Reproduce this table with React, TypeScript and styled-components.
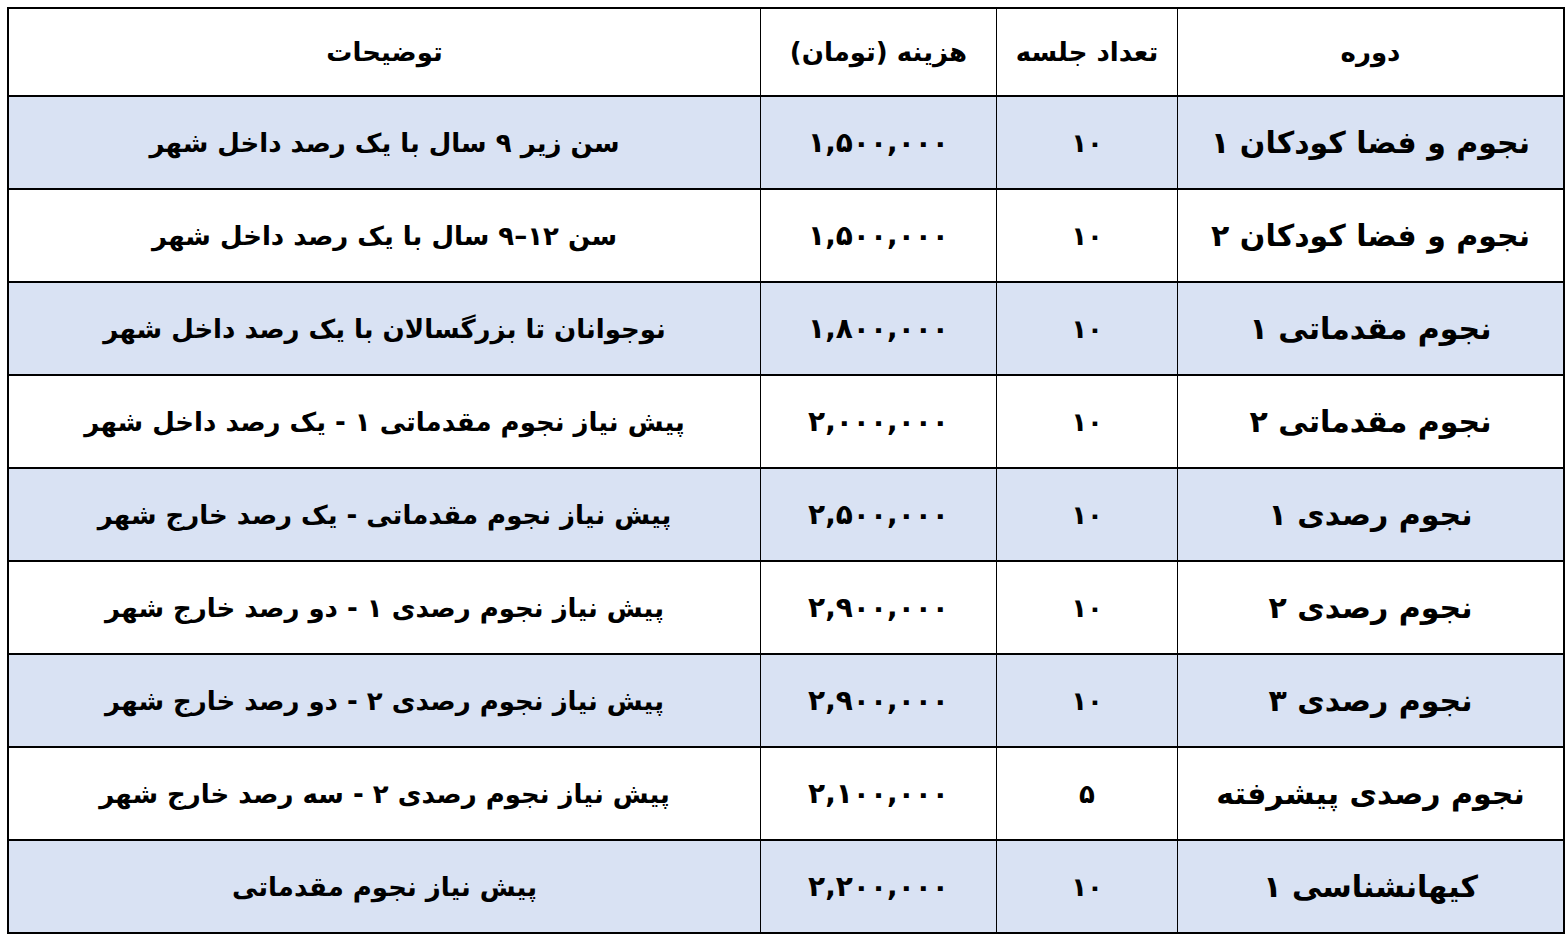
import React from "react";
import styled, { createGlobalStyle } from "styled-components";

const GlobalStyle = createGlobalStyle`
    html, body {
        margin: 0;
        padding: 0;
        background: #ffffff;
    }
    body {
        font-family: "DejaVu Sans", "Noto Sans", sans-serif;
    }
`;

const Page = styled.div`
    padding: 7px 6px 6px 7px;
`;

const Table = styled.table`
    width: 1551px;
    direction: rtl;
    border-collapse: collapse;
    border: 2px solid #000;
    table-layout: fixed;
    color: #000;
`;

const HeadCell = styled.th<{ $w: number }>`
    width: ${p => p.$w}px;
    height: 86px;
    padding: 0;
    border-left: 1px solid #000;
    border-right: 1px solid #000;
    border-bottom: 2px solid #000;
    font-size: 26px;
    font-weight: bold;
    text-align: center;
    vertical-align: middle;
`;

const Row = styled.tr<{ $shaded: boolean }>`
    height: 93px;
    background-color: ${p => (p.$shaded ? "#d9e2f3" : "#ffffff")};
`;

const Cell = styled.td<{ $size: number }>`
    padding: 0 6px;
    border-left: 1px solid #000;
    border-right: 1px solid #000;
    border-bottom: 2px solid #000;
    font-size: ${p => p.$size}px;
    font-weight: bold;
    text-align: center;
    vertical-align: middle;
    white-space: nowrap;
`;

const courses = [
    { name: "نجوم و فضا کودکان ۱", sessions: "۱۰", price: "۱,۵۰۰,۰۰۰", note: "سن زیر ۹ سال با یک رصد داخل شهر" },
    { name: "نجوم و فضا کودکان ۲", sessions: "۱۰", price: "۱,۵۰۰,۰۰۰", note: "سن ۱۲–۹ سال با یک رصد داخل شهر" },
    { name: "نجوم مقدماتی ۱", sessions: "۱۰", price: "۱,۸۰۰,۰۰۰", note: "نوجوانان تا بزرگسالان با یک رصد داخل شهر" },
    { name: "نجوم مقدماتی ۲", sessions: "۱۰", price: "۲,۰۰۰,۰۰۰", note: "پیش نیاز نجوم مقدماتی ۱ - یک رصد داخل شهر" },
    { name: "نجوم رصدی ۱", sessions: "۱۰", price: "۲,۵۰۰,۰۰۰", note: "پیش نیاز نجوم مقدماتی - یک رصد خارج شهر" },
    { name: "نجوم رصدی ۲", sessions: "۱۰", price: "۲,۹۰۰,۰۰۰", note: "پیش نیاز نجوم رصدی ۱ - دو رصد خارج شهر" },
    { name: "نجوم رصدی ۳", sessions: "۱۰", price: "۲,۹۰۰,۰۰۰", note: "پیش نیاز نجوم رصدی ۲ - دو رصد خارج شهر" },
    { name: "نجوم رصدی پیشرفته", sessions: "۵", price: "۲,۱۰۰,۰۰۰", note: "پیش نیاز نجوم رصدی ۲ - سه رصد خارج شهر" },
    { name: "کیهانشناسی ۱", sessions: "۱۰", price: "۲,۲۰۰,۰۰۰", note: "پیش نیاز نجوم مقدماتی" },
];

export default function App() {
    return (
        <Page>
            <GlobalStyle />
            <Table>
                <thead>
                    <tr>
                        <HeadCell $w={385}>دوره</HeadCell>
                        <HeadCell $w={180}>تعداد جلسه</HeadCell>
                        <HeadCell $w={235}>هزینه (تومان)</HeadCell>
                        <HeadCell $w={751}>توضیحات</HeadCell>
                    </tr>
                </thead>
                <tbody>
                    {courses.map((c, i) => (
                        <Row key={c.name} $shaded={i % 2 === 0}>
                            <Cell $size={30}>{c.name}</Cell>
                            <Cell $size={26}>{c.sessions}</Cell>
                            <Cell $size={28}>{c.price}</Cell>
                            <Cell $size={26}>{c.note}</Cell>
                        </Row>
                    ))}
                </tbody>
            </Table>
        </Page>
    );
}
